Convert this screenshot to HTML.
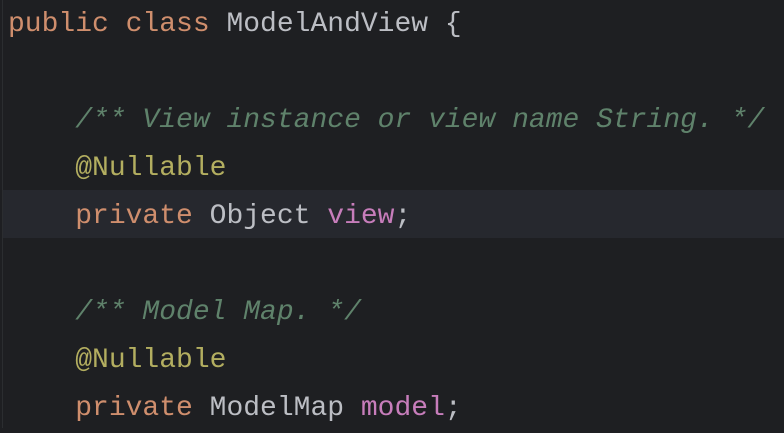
<!DOCTYPE html>
<html><head><style>
html,body{margin:0;padding:0;width:784px;height:428px;background:#1e1f22;overflow:hidden}
.bar{position:absolute;left:2px;top:0;width:1px;height:428px;background:#2b2d30}
.hl{position:absolute;left:3px;top:190px;width:781px;height:48px;background:#26282e}
pre{position:absolute;left:8px;top:1px;margin:0;font-family:"Liberation Mono",monospace;font-size:28px;line-height:48px;color:#bcbec4}
.k{color:#cf8e6d}.c{color:#5f826b;font-style:italic}.a{color:#b3ae60}.f{color:#c77dbb}
</style></head><body>
<div class="bar"></div><div class="hl"></div>
<pre><span class="k">public class</span> ModelAndView {

    <span class="c">/** View instance or view name String. */</span>
    <span class="a">@Nullable</span>
    <span class="k">private</span> Object <span class="f">view</span>;

    <span class="c">/** Model Map. */</span>
    <span class="a">@Nullable</span>
    <span class="k">private</span> ModelMap <span class="f">model</span>;</pre>
</body></html>
